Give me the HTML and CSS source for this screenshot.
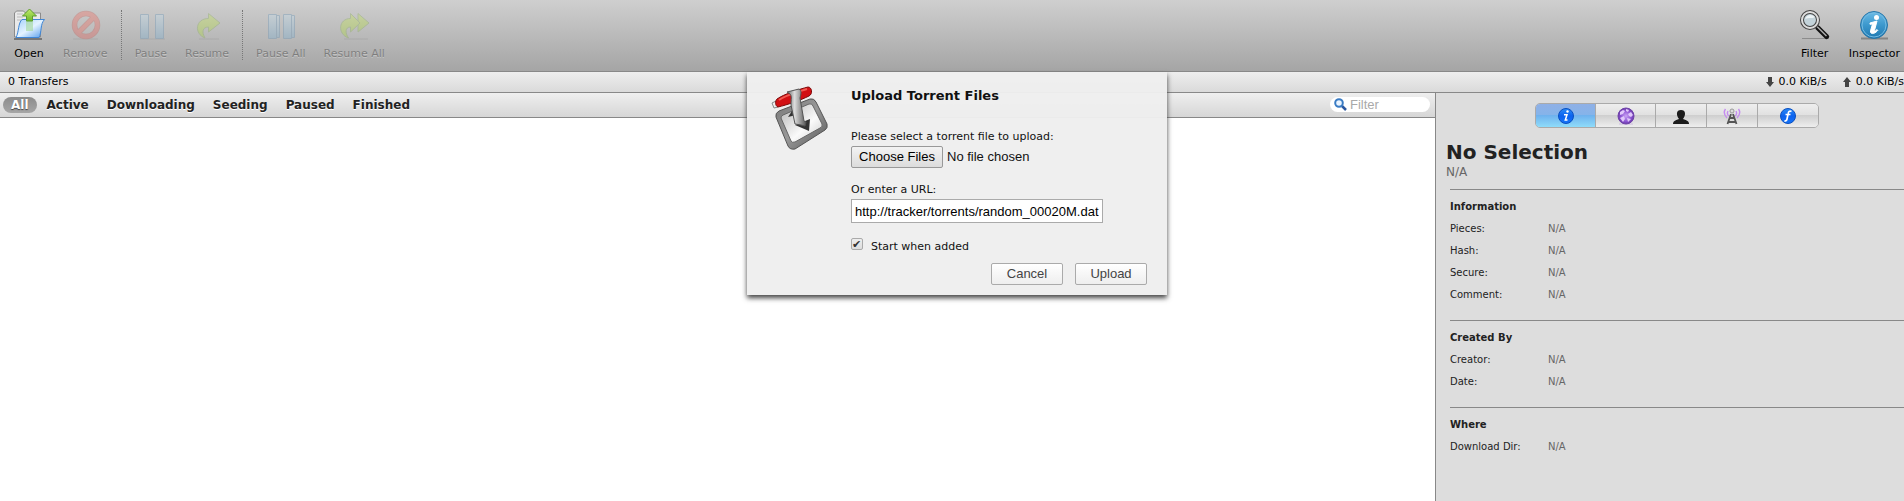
FILE: index.html
```html
<!DOCTYPE html>
<html lang="en">
<head>
<meta charset="utf-8">
<title>Transmission Web Interface</title>
<link rel="stylesheet" href="styles.css">
</head>
<body>
<svg class="defs" width="0" height="0" aria-hidden="true">
  <defs>
    <linearGradient id="folder" x1="0" y1="0" x2="1" y2="1"><stop offset="0" stop-color="#a5d0f8"/><stop offset=".5" stop-color="#e4f3ff"/><stop offset="1" stop-color="#4f98ea"/></linearGradient>
    <linearGradient id="green" x1="0" y1="0" x2="0" y2="1"><stop offset="0" stop-color="#c3ec6c"/><stop offset="1" stop-color="#6db82b"/></linearGradient>
    <linearGradient id="lime" x1="0" y1="0" x2="0" y2="1"><stop offset="0" stop-color="#c8f03c"/><stop offset="1" stop-color="#a4e010"/></linearGradient>
    <linearGradient id="red" x1="0" y1="0" x2="0" y2="1"><stop offset="0" stop-color="#ff5040"/><stop offset="1" stop-color="#f04840"/></linearGradient>
    <linearGradient id="bar" x1="0" y1="0" x2="0" y2="1"><stop offset="0" stop-color="#c5e4f6"/><stop offset="1" stop-color="#69aede"/></linearGradient>
    <linearGradient id="info" x1="0" y1="0" x2="0" y2="1"><stop offset="0" stop-color="#6cbce6"/><stop offset=".5" stop-color="#3c98cd"/><stop offset="1" stop-color="#1f78b0"/></linearGradient>
    <linearGradient id="blue" x1="0" y1="0" x2="0" y2="1"><stop offset="0" stop-color="#2a8cf8"/><stop offset=".5" stop-color="#0c62ee"/><stop offset="1" stop-color="#1674f8"/></linearGradient>
    <linearGradient id="metal" x1="0" y1="0" x2="1" y2="1"><stop offset="0" stop-color="#777"/><stop offset=".5" stop-color="#999"/><stop offset="1" stop-color="#555"/></linearGradient>
    <linearGradient id="plate" x1="0" y1="0" x2="1" y2="1"><stop offset="0" stop-color="#b4b4b4"/><stop offset=".6" stop-color="#fafafa"/><stop offset="1" stop-color="#ccc"/></linearGradient>
    <linearGradient id="shaft" x1="0" y1="0" x2="1" y2="0"><stop offset="0" stop-color="#666"/><stop offset=".4" stop-color="#ddd"/><stop offset="1" stop-color="#555"/></linearGradient>
    <radialGradient id="globe"><stop offset="0" stop-color="#c9a2f5"/><stop offset=".7" stop-color="#8a52d0"/><stop offset="1" stop-color="#6a3aa8"/></radialGradient>
  </defs>
</svg>

<header class="toolbar">
  <button class="tool" type="button">
    <svg width="32" height="32" viewBox="0 0 32 32"><path d="M1 31h28" stroke="#777" stroke-width="2"/><path d="M1.500 29V5l2-2h7l2 2h15v24z" fill="#e9e9e9" stroke="#8b8b8b"/><path d="M4 6h6M4 9h6M4 12h5" stroke="#bbb"/><path d="M3 29.500C6 24 5 15 9 11.500h22.500C27 16 29 24 26 29.500z" fill="url(#folder)" stroke="#3f86d6"/><path d="M13 9h7v14h-7z" fill="#a6d8a0" opacity=".65"/><path d="M16.500 1l7 7h-4v5h-6V8h-4z" fill="url(#green)" stroke="#5e9c30"/></svg>
    <span>Open</span>
  </button>
  <button class="tool" type="button" disabled>
    <svg width="32" height="32" viewBox="0 0 32 32"><path d="M4 31h25" stroke="#888"/><circle cx="17" cy="17" r="11.500" fill="none" stroke="#c53c32" stroke-width="5.500"/><path d="M9.500 24.500l15-15" stroke="#c53c32" stroke-width="5.500"/><circle cx="17" cy="17" r="11.500" fill="none" stroke="url(#red)" stroke-width="4"/><path d="M9.500 24.500l15-15" stroke="#ff5040" stroke-width="4"/></svg>
    <span>Remove</span>
  </button>
  <span class="rule"></span>
  <button class="tool" type="button" disabled>
    <svg width="32" height="32" viewBox="0 0 32 32"><path d="M5 31h25" stroke="#888"/><path d="M5.500 6.500h8v24h-8zM20.500 6.500h8v24h-8z" fill="url(#bar)" stroke="#4c86b4"/></svg>
    <span>Pause</span>
  </button>
  <button class="tool" type="button" disabled>
    <svg width="32" height="32" viewBox="0 0 32 32"><path d="M8 31h20" stroke="#888"/><path d="M17.500 5.500L29 15 17.500 24v-5c-6 0-7 5-3.500 11C3 26 4 10.500 17.500 10.500z" fill="url(#lime)" stroke="#7aa83c"/></svg>
    <span>Resume</span>
  </button>
  <span class="rule"></span>
  <button class="tool" type="button" disabled>
    <svg width="32" height="32" viewBox="0 0 32 32"><path d="M10.500 7.500h4v22h-4zM25.500 7.500h4v22h-4z" fill="url(#bar)" stroke="#4c86b4"/><path d="M3.500 6.500h8v24h-8zM18.500 6.500h8v24h-8z" fill="url(#bar)" stroke="#4c86b4"/></svg>
    <span>Pause All</span>
  </button>
  <button class="tool" type="button" disabled>
    <svg width="32" height="32" viewBox="0 0 32 32"><path d="M6 31h24" stroke="#888"/><path d="M20 5.500L31 15 20 24z" fill="url(#lime)" stroke="#7aa83c"/><path d="M12.500 5.500L22 15l-9.500 9v-5C7 19 7 25 10.500 30-1 26 .5 10.500 12.500 10.500z" fill="url(#lime)" stroke="#7aa83c"/></svg>
    <span>Resume All</span>
  </button>
  <span class="spacer"></span>
  <button class="tool" type="button">
    <svg width="32" height="32" viewBox="0 0 32 32"><path d="M3 30.500h27" stroke="#8c8c8c"/><path d="M19 20l8.500 8.500" stroke="#111" stroke-width="5" stroke-linecap="round"/><path d="M18 18.500l9.500 9.500" stroke="#aaa" stroke-width="1.500"/><circle cx="11" cy="12" r="8" fill="#c3d3da" stroke="#444" stroke-width="4"/><circle cx="11" cy="12" r="8" fill="none" stroke="#ddd" stroke-width="2"/><path d="M6 11c2-5 7-5 10-2-3 2-6 0-10 2z" fill="#edf4f6"/></svg>
    <span>Filter</span>
  </button>
  <button class="tool" type="button">
    <svg width="32" height="32" viewBox="0 0 32 32"><path d="M3 30.500h27" stroke="#858585" stroke-width="2"/><circle cx="16" cy="17" r="13.500" fill="url(#info)" stroke="#2775a8"/><circle cx="16" cy="17" r="12" fill="none" stroke="#75bbe2"/><circle cx="18.500" cy="9.500" r="2.500" fill="#fff"/><path d="M12 15l7-2-2.500 9.500c0 1 1 .5 2.500-1l.8.8c-3 4-8 4.500-7.300.5L14.500 16l-2.500.3z" fill="#fff" stroke="#fff"/></svg>
    <span>Inspector</span>
  </button>
</header>

<div class="statusbar">
  <span>0 Transfers</span>
  <span class="spacer"></span>
  <span class="speed"><svg width="8" height="10" viewBox="0 0 8 10"><path d="M2 0h4v5h2L4 10 0 5h2z" fill="#444"/></svg>0.0 KiB/s</span>
  <span class="speed"><svg width="8" height="10" viewBox="0 0 8 10"><path d="M2 10h4V5h2L4 0 0 5h2z" fill="#444"/></svg>0.0 KiB/s</span>
</div>

<div class="workspace">
  <main class="transfers">
    <nav class="filters">
      <button class="pill current" type="button">All</button>
      <button class="pill" type="button">Active</button>
      <button class="pill" type="button">Downloading</button>
      <button class="pill" type="button">Seeding</button>
      <button class="pill" type="button">Paused</button>
      <button class="pill" type="button">Finished</button>
      <span class="spacer"></span>
      <label class="search">
        <svg width="13" height="13" viewBox="0 0 13 13"><path d="M8 8l4 4" stroke="#2b57a0" stroke-width="2.500"/><circle cx="5" cy="5" r="3.800" fill="#eaf4ff" stroke="#3a7cc4" stroke-width="2"/></svg>
        <input type="text" placeholder="Filter" aria-label="Filter">
      </label>
    </nav>
  </main>

  <aside class="inspector">
    <div class="tabs">
      <button class="tab selected" type="button" aria-label="Info"><svg width="18" height="18" viewBox="0 0 18 18"><circle cx="9" cy="9" r="7.500" fill="url(#blue)" stroke="#0b4fc0"/><circle cx="10.500" cy="4.500" r="1.200" fill="#fff"/><path d="M7 7.800h3L8.300 13h2.200" fill="none" stroke="#fff" stroke-width="1.500"/></svg></button>
      <button class="tab" type="button" aria-label="Peers"><svg width="18" height="18" viewBox="0 0 18 18"><path d="M2 17h14" stroke="#cdbce0"/><circle cx="9" cy="9" r="8" fill="url(#globe)" stroke="#6f43a8"/><path d="M3 5l3-2 2 1-2 3-3 1zM9 2l3 1-1 2-2-1zM11 7l3-2 2 3-2 2-2-1zM3 11l4-2 1 3-2 3zM10 11l4 1-3 3z" fill="#e0c8fa"/></svg></button>
      <button class="tab narrow" type="button" aria-label="Activity"><svg width="18" height="18" viewBox="0 0 18 18"><path d="M1 17c0-3 2-3.500 6-5C4 8 4 3 9 3s5 5 2 9c4 1.500 6 2 6 5z" fill="#1c1c1c"/></svg></button>
      <button class="tab narrow" type="button" aria-label="Trackers"><svg width="18" height="18" viewBox="0 0 18 18"><g fill="none" stroke="#c58cf0" stroke-width="1.400"><path d="M2.500 2C.5 5 1 8 4 11M15.500 2c2 3 1.500 6-1.500 9M5 4c-1 2-.5 4 1 5M13 4c1 2 .5 4-1 5"/></g><path d="M8 7L4.500 17M10 7l3.500 10M7 11h4M5.500 15h7" fill="none" stroke="#555" stroke-width="1.800"/><circle cx="9" cy="4" r="2" fill="#ddd" stroke="#999"/></svg></button>
      <button class="tab" type="button" aria-label="Files"><svg width="18" height="18" viewBox="0 0 18 18"><circle cx="9" cy="9" r="7.500" fill="url(#blue)" stroke="#0b4fc0"/><path d="M12.500 4.500c-2-1-3 0-3.300 2L8 12c-.4 2-1.500 2.300-2.500 1.500M6.500 7.500h5" fill="none" stroke="#fff" stroke-width="1.700"/></svg></button>
    </div>
    <h1>No Selection</h1>
    <p class="subtitle">N/A</p>
    <section>
      <h2>Information</h2>
      <dl>
        <dt>Pieces:</dt><dd>N/A</dd>
        <dt>Hash:</dt><dd>N/A</dd>
        <dt>Secure:</dt><dd>N/A</dd>
        <dt>Comment:</dt><dd>N/A</dd>
      </dl>
    </section>
    <section>
      <h2>Created By</h2>
      <dl>
        <dt>Creator:</dt><dd>N/A</dd>
        <dt>Date:</dt><dd>N/A</dd>
      </dl>
    </section>
    <section>
      <h2>Where</h2>
      <dl>
        <dt>Download Dir:</dt><dd>N/A</dd>
      </dl>
    </section>
  </aside>

  <form class="dialog" role="dialog" aria-labelledby="dialog-title">
    <svg class="logo" width="64" height="72" viewBox="0 0 64 72">
      <path d="M8 27l31-12q4-1 6 3l11 22q1 4-2 6L24 65q-5 1-7-3L5 33q-1-4 3-6z" fill="url(#metal)" stroke="#555"/>
      <path d="M12 31l26-11q3-1 4 2l9 18q1 3-2 4L24 58q-3 1-4-1L10 34q0-2 2-3z" fill="url(#plate)" stroke="#666"/>
      <path d="M17 33l6-9 2 7z" fill="#333"/>
      <path d="M24 41l15-6-1 12z" fill="#333"/>
      <path d="M1 19l4-2 2 6-4 1z" fill="#eee" stroke="#888"/>
      <path d="M6 15C13 10 29 5 37 3c4 0 5 7 1 9-8 4-22 9-31 11-3-1-3-6-1-8z" fill="#d20f13" stroke="#7c0808"/>
      <path d="M8 16c7-5 19-8 28-11" stroke="#f15a52" stroke-width="2" fill="none"/>
      <path d="M16 8l12-3c3 2 2 5 1 9l4 23 2 1-1 4-4-1-6-1-4-19c0-6 1-9-1-11z" fill="url(#shaft)" stroke="#555"/>
    </svg>
    <div class="fields">
      <h2 class="dialog-title" id="dialog-title">Upload Torrent Files</h2>
      <label class="caption" for="files">Please select a torrent file to upload:</label>
      <input class="files" id="files" type="file" multiple>
      <label class="caption" for="url">Or enter a URL:</label>
      <input class="url" id="url" type="text" value="http://tracker/torrents/random_00020M.dat">
      <div class="start">
        <input id="start" type="checkbox" checked>
        <label for="start">Start when added</label>
      </div>
    </div>
    <div class="actions">
      <button type="button">Cancel</button>
      <button type="submit">Upload</button>
    </div>
  </form>
</div>
</body>
</html>
```
FILE: styles.css
```css
* { box-sizing: border-box; }

body {
  margin: 0;
  min-height: 100vh;
  display: flex;
  flex-direction: column;
  overflow: hidden;
  background: #fff;
  color: #222;
  font: 11px/14px "DejaVu Sans", Verdana, sans-serif;
}

h1, h2, p, dl, dd { margin: 0; }
button { font-family: inherit; }
.defs { position: absolute; }
.spacer { flex: 1; }

.toolbar {
  display: flex;
  align-items: flex-start;
  padding: 8px 4px 10px;
  border-bottom: 1px solid #888;
  background: linear-gradient(#cfcfcf, #a5a5a5);
}

.tool {
  display: flex;
  flex-direction: column;
  align-items: center;
  padding: 0 9px;
  border: 0;
  background: none;
  color: #000;
  font-size: 11px;
  line-height: 14px;
  text-shadow: 0 1px 0 #bbb;
}
.tool svg { margin-bottom: 7px; }
.tool:last-child { padding-right: 0; }
.tool:disabled { color: #000; opacity: .28; text-shadow: 0 1px 0 #fff; }

.rule {
  height: 50px;
  margin: 2px 4px 0;
  border-left: 1px dotted #777;
}

.statusbar {
  display: flex;
  align-items: center;
  gap: 16px;
  height: 21px;
  padding-left: 8px;
  border-bottom: 1px solid #888;
  background: linear-gradient(#eee, #dadada);
  color: #000;
}
.speed { display: flex; align-items: center; gap: 5px; white-space: nowrap; }

.workspace { flex: 1; display: flex; position: relative; }
.transfers { flex: 1; }

.filters {
  display: flex;
  align-items: center;
  gap: 2px;
  height: 25px;
  padding: 0 5px 1px 3px;
  border-bottom: 1px solid #888;
  background: linear-gradient(#efefef, #d6d6d6);
}
.pill {
  padding: 0 8px;
  border: 0;
  border-radius: 8px;
  background: none;
  color: #222;
  font-size: 12px;
  font-weight: bold;
  line-height: 16px;
  text-shadow: 0 1px 0 #fff;
}
.pill.current {
  background: linear-gradient(#8c8c8c, #a6a6a6);
  color: #fff;
  text-shadow: 0 1px 1px #444;
}
.search {
  display: flex;
  align-items: center;
  gap: 3px;
  width: 100px;
  height: 15px;
  padding: 0 4px;
  border-radius: 8px;
  background: #fff;
}
.search input {
  flex: 1;
  min-width: 0;
  padding: 0;
  border: 0;
  background: none;
  font: 13px/15px "Liberation Sans", Arial, sans-serif;
}
.search input::placeholder { color: #a9a9a9; }

.inspector {
  width: 469px;
  padding: 10px 0 0 14px;
  border-left: 1px solid #888;
  background: #ddd;
}
.tabs {
  display: flex;
  width: max-content;
  height: 25px;
  margin: 0 auto 12px 85px;
  border: 1px solid #aaa;
  border-radius: 5px;
  overflow: hidden;
}
.tab {
  display: flex;
  align-items: center;
  justify-content: center;
  width: 60px;
  padding: 0;
  border: 0;
  border-right: 1px solid #aaa;
  background: linear-gradient(#eee, #e0e0e0 50%, #cfcfcf 50%, #eee);
}
.tab:last-child { border-right: 0; }
.tab.narrow { width: 51px; }
.tab.selected { background: linear-gradient(#8fb0e6, #85b4ea 50%, #6fb2ee 50%, #8fdcfa); }

.inspector h1 {
  margin-left: -4px;
  font-size: 20px;
  line-height: 24px;
}
.subtitle { margin: 0 0 9px -4px; font-size: 12px; line-height: 16px; color: #666; }

.inspector section {
  padding: 6px 0 14px;
  border-top: 1px solid #888;
  font-size: 10px;
  line-height: 22px;
}
.inspector section h2 { font-size: 10px; }
.inspector dl { display: grid; grid-template-columns: 98px 1fr; }
.inspector dd { color: #666; }

.dialog {
  position: absolute;
  top: -21px;
  left: 50%;
  display: grid;
  grid-template-columns: 80px 252px;
  width: 420px;
  margin-left: -205px;
  padding: 12px 20px 10px 24px;
  background: rgba(238, 238, 238, .97);
  box-shadow: 0 3px 5px #444;
  color: #111;
}
.fields { display: flex; flex-direction: column; }
.dialog-title { margin-bottom: 22px; font-size: 13px; line-height: 24px; }
.caption { line-height: 14px; }
.files {
  height: 22px;
  margin: 2px 0 15px;
  font: 13px/20px "Liberation Sans", Arial, sans-serif;
}
.files::file-selector-button {
  width: 92px;
  height: 22px;
  margin-right: 4px;
  padding: 0;
  border: 1px solid #999;
  border-radius: 2px;
  background: linear-gradient(#f3f3f3, #dcdcdc);
  font: 13px/20px "Liberation Sans", Arial, sans-serif;
}
.url {
  height: 24px;
  margin: 2px 0 15px;
  padding: 0 3px;
  border: 1px solid #aaa;
  background: #fff;
  color: #000;
  font: 13px/20px "Liberation Sans", Arial, sans-serif;
}
.start { display: flex; gap: 8px; line-height: 18px; }
.start input {
  appearance: none;
  width: 12px;
  height: 12px;
  margin: 0;
  border: 1px solid #aaa;
  border-radius: 2px;
  background: linear-gradient(#eee, #ddd);
}
.start input:checked::before {
  content: "✔";
  display: block;
  color: #333;
  font-size: 11px;
  line-height: 10px;
}
.actions {
  grid-column: 1 / -1;
  display: flex;
  justify-content: flex-end;
  gap: 12px;
  margin: 7px -44px 0 0;
}
.actions button {
  width: 72px;
  height: 22px;
  padding: 0;
  border: 1px solid #aaa;
  border-radius: 2px;
  background: linear-gradient(#fff, #eee);
  color: #444;
  font: 13px/20px "Liberation Sans", Arial, sans-serif;
}
```
